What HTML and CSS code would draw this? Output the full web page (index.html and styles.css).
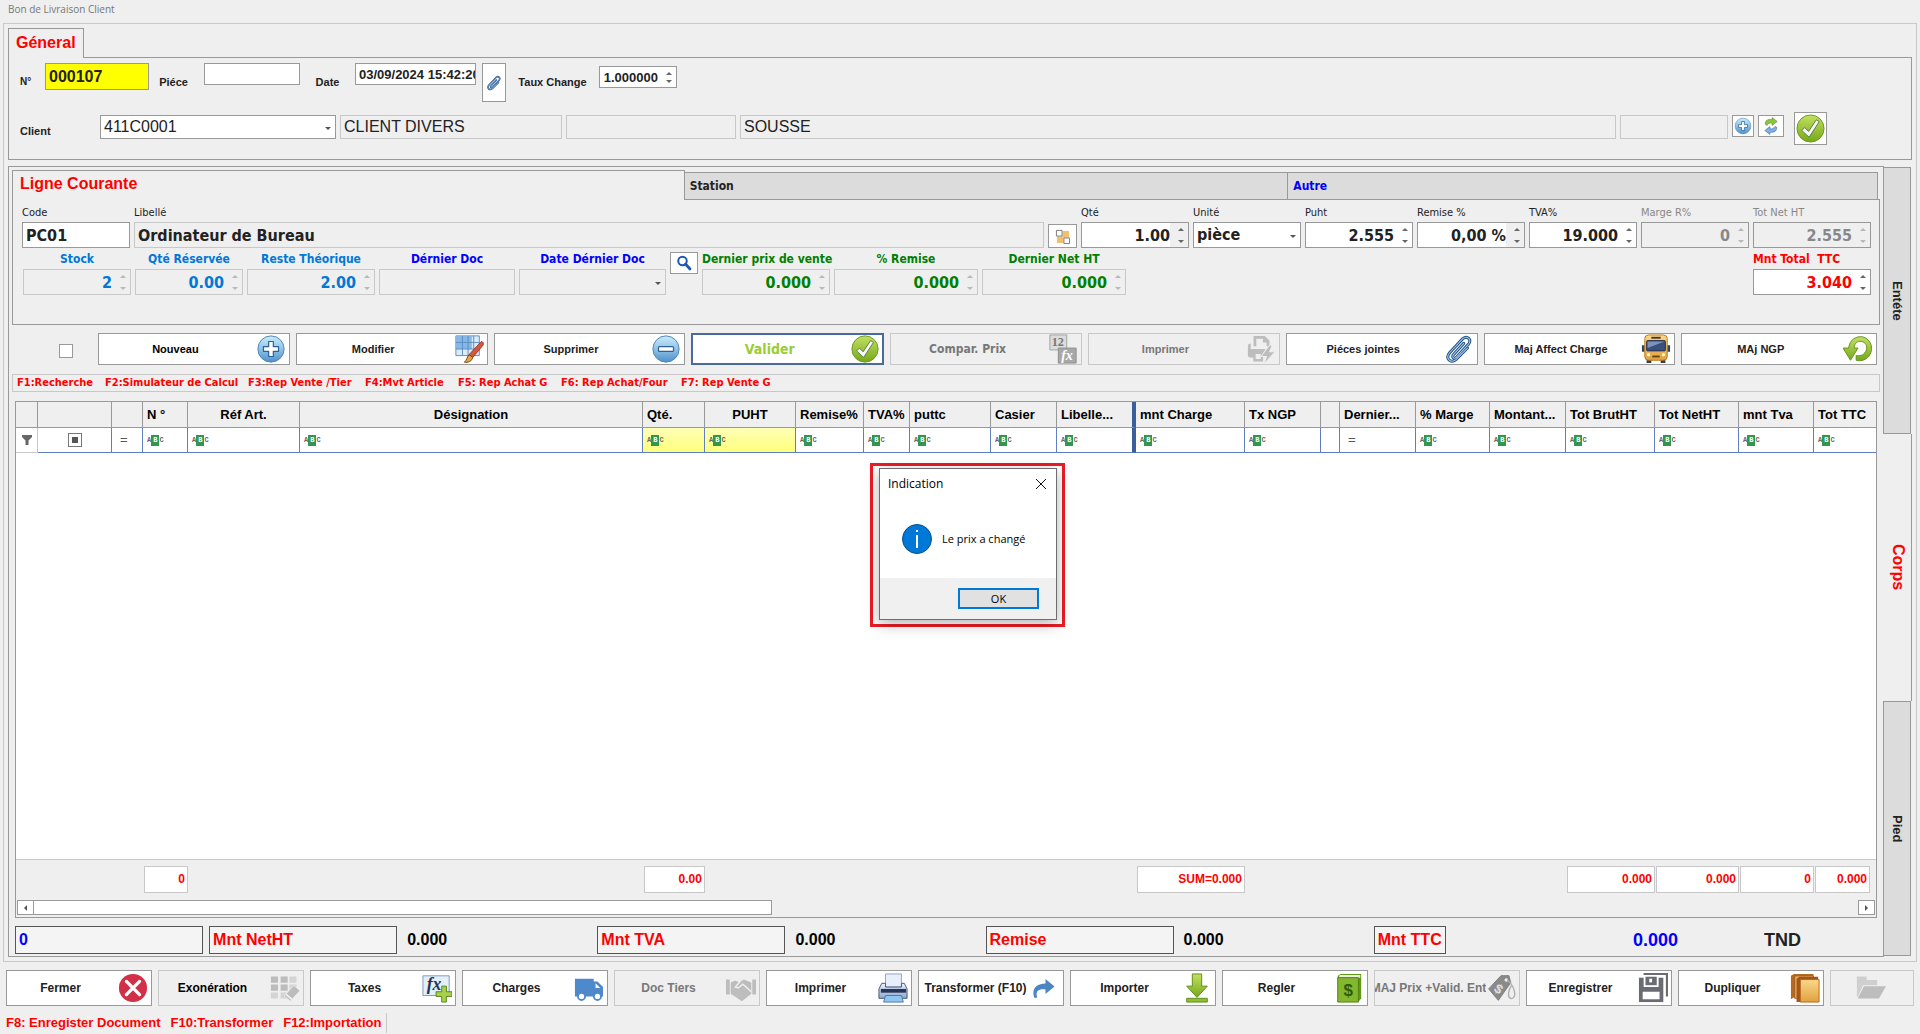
FILE: index.html
```html
<!DOCTYPE html>
<html lang="fr">
<head>
<meta charset="utf-8">
<title>Bon de Livraison Client</title>
<link rel="stylesheet" href="styles.css">
</head>
<body>
<svg class="sprite" aria-hidden="true">
  <defs>
    <linearGradient id="gBlue" x1="0" y1="0" x2="0" y2="1"><stop offset="0" stop-color="#c9ecf8"/><stop offset=".5" stop-color="#8fc3e8"/><stop offset="1" stop-color="#4f8fcb"/></linearGradient>
    <linearGradient id="gGreen" x1="0" y1="0" x2="0" y2="1"><stop offset="0" stop-color="#c4e062"/><stop offset="1" stop-color="#74a81a"/></linearGradient>
    <linearGradient id="gGold" x1="0" y1="0" x2="0" y2="1"><stop offset="0" stop-color="#fbd98a"/><stop offset="1" stop-color="#e0a040"/></linearGradient>
    <linearGradient id="gSteel" x1="0" y1="0" x2="0" y2="1"><stop offset="0" stop-color="#eef3fb"/><stop offset="1" stop-color="#8fa6c8"/></linearGradient>
  </defs>
  <symbol id="i-plus" viewBox="0 0 32 32"><circle cx="16" cy="16" r="14" fill="url(#gBlue)" stroke="#4c82b8"/><path d="M13.500 8h5v5.500H24v5h-5.500V24h-5v-5.500H8v-5h5.500z" fill="#fff" stroke="#2f5f96" stroke-width="1.300" stroke-linejoin="round"/></symbol>
  <symbol id="i-minus" viewBox="0 0 32 32"><circle cx="16" cy="16" r="14" fill="url(#gBlue)" stroke="#4c82b8"/><rect x="8" y="13.500" width="16" height="5" rx="1" fill="#fff" stroke="#2f5f96" stroke-width="1.300"/></symbol>
  <symbol id="i-check" viewBox="0 0 32 32"><circle cx="16" cy="16" r="14" fill="url(#gGreen)" stroke="#6a9a1c"/><path d="M7 18l3-3 4 4L22 7l3 2-10.500 16z" fill="#f4f7fb" stroke="#5b7a3a" stroke-width="1"/></symbol>
  <symbol id="i-tablebrush" viewBox="0 0 32 32"><path d="M2 2h25v21H2z" fill="#dcebf8" stroke="#5b8bc4"/><path d="M2 2h17v14H2z" fill="#86b8e6"/><path d="M2 9h25M2 16h25M9 2v21M15 2v21M21 2v21" stroke="#5b8bc4" fill="none"/><path d="M29 8c2 0 3 2 2 4l-11 13-4-3z" fill="#d4573c" stroke="#8b2b1b" stroke-width=".8"/><path d="M16 22l4 3c-1 4-5 6-9 5 3-2 3-6 5-8z" fill="#e5a541" stroke="#6b3f16"/></symbol>
  <symbol id="i-printbolt" viewBox="0 0 32 32"><path d="M8 2h12l5 5v6h-3V9h-4V5H11v8H8zM2 13c0-2 1-3 3-3v6h16l-6 9H5c-2 0-3-1-3-3z" fill="#bdbdbd"/><path d="M9 20h8v8H9z" fill="#efefef" stroke="#bdbdbd" stroke-width="2.500"/><path d="M25 12l-9 12h6l-3 8 12-13h-6l3-7z" fill="#bdbdbd" stroke="#efefef"/></symbol>
  <symbol id="i-clip" viewBox="0 0 32 32"><g fill="none" stroke-linecap="round"><path d="M21 10L10 22c-2 3 1 5 3 3L26 11c4-5-1-10-6-6L6 20c-5 6 1 12 7 7L25 15" stroke="#1f4f86" stroke-width="3.200"/><path d="M21 10L10 22c-2 3 1 5 3 3L26 11c4-5-1-10-6-6L6 20c-5 6 1 12 7 7L25 15" stroke="#a7cbec" stroke-width="1.100"/></g></symbol>
  <symbol id="i-bus" viewBox="0 0 32 32"><path d="M6 27h5v4H6zM21 27h5v4h-5z" fill="#333f4d"/><path d="M1 12h3v7H1zM28 12h3v7h-3z" fill="#33405a"/><rect x="4" y="1" width="24" height="27" rx="4" fill="url(#gGold)" stroke="#b87718"/><rect x="6" y="7" width="20" height="11" rx="1" fill="#3a4f7b" stroke="#222e4a"/><path d="M7 8h18L7 15z" fill="#7c93be"/><path d="M11 3h10v2H11z" fill="#4a3620"/><path d="M12 23h8v2h-8z" fill="#6b4515"/><circle cx="8" cy="22" r="1.800" fill="#fff6c8"/><circle cx="24" cy="22" r="1.800" fill="#fff6c8"/></symbol>
  <symbol id="i-undo" viewBox="0 0 32 32"><path d="M6 15C7 6 14 2 21 3c7 2 11 9 9 16-2 7-9 11-16 9v-5c5 1 9-1 11-6 1-5-1-8-5-9-5-1-8 2-8 7h4L8 28 0 15z" fill="url(#gGreen)" stroke="#5f9019"/></symbol>
  <symbol id="i-refresh" viewBox="0 0 32 32"><path d="M6 13C5 6 11 3 18 5V1l9 7-9 7v-4c-5-1-7 0-9 4z" fill="#8cc63f" stroke="#4f8a1e"/><path d="M26 18c1 7-5 10-12 9v4l-9-7 9-7v4c5 1 7-1 9-4z" fill="#7fb0e6" stroke="#2d66a8"/></symbol>
  <symbol id="i-search" viewBox="0 0 32 32"><circle cx="13" cy="12" r="8.500" fill="#fff" stroke="#1d57b5" stroke-width="4"/><path d="M19 18l9 10" stroke="#1d57b5" stroke-width="5.500" stroke-linecap="round"/></symbol>
  <symbol id="i-tree" viewBox="0 0 16 16"><path d="M2 8h7v7H2zM8 2h7v7H8z" fill="#f0c070"/><path d="M1.500 1.500h6v6h-6zM9.500 9.500h6v6h-6z" fill="#fff" stroke="#777"/></symbol>
  <symbol id="i-close" viewBox="0 0 32 32"><circle cx="16" cy="16" r="15" fill="#d13046"/><path d="M9 9l14 14M23 9L9 23" stroke="#fff" stroke-width="3.500" stroke-linecap="round"/></symbol>
  <symbol id="i-erase" viewBox="0 0 34 32"><path d="M1 3h8v7H1zM12 3h8v7h-8zM1 12h8v7H1zM12 12h8v7h-8z" fill="#bcbcbc"/><path d="M22 3h8v7h-8zM22 12h8v7h-8zM1 21h8v7H1zM12 21h8v7h-8z" fill="#d4d4d4"/><path d="M27 13l7 6-11 12-7-6z" fill="#bcbcbc" stroke="#efefef"/><path d="M18 23l7 6" stroke="#efefef" stroke-width="2"/></symbol>
  <symbol id="i-van" viewBox="0 0 32 32"><path d="M1 6h20v3h4l6 6v10H1z" fill="#4d89cb"/><path d="M23 11l5 5h-5z" fill="#fff"/><circle cx="8" cy="25" r="3.800" fill="#fff" stroke="#4d89cb" stroke-width="2"/><circle cx="25" cy="25" r="3.800" fill="#fff" stroke="#4d89cb" stroke-width="2"/></symbol>
  <symbol id="i-hands" viewBox="0 0 32 32"><path d="M0 7h4v16H0zM28 7h4v16h-4zM5 10l5-2 4 2 5-3 8 3v12l-10 8-12-8z" fill="#bdbdbd"/><path d="M27 20l-9-8-5 4-3-1 5-6" fill="none" stroke="#efefef" stroke-width="1.600"/></symbol>
  <symbol id="i-printer" viewBox="0 0 32 32"><path d="M8 1h17v14H8z" fill="#e8eefa" stroke="#8ba0c4"/><path d="M4 11h4v4h17v-4h3l3 6v10H1V17z" fill="url(#gSteel)" stroke="#3e547e"/><path d="M3 17h27v4H3z" fill="#25365c"/><path d="M8 24h17l2 7H6z" fill="#8fc6f0" stroke="#4577ad"/></symbol>
  <symbol id="i-redo" viewBox="0 0 32 32"><path d="M3 29C-1 17 6 10 18 10V4l12 10-12 10v-6C9 17 4 20 7 29z" fill="#4a86c2"/></symbol>
  <symbol id="i-down" viewBox="0 0 32 32"><path d="M11 1h10v13h6L16 26 5 14h6z" fill="url(#gGreen)" stroke="#5b8c14"/><path d="M5 27h22v4H5z" fill="#8fbf30" stroke="#5b8c14"/></symbol>
  <symbol id="i-save" viewBox="0 0 32 32"><path d="M6 1h25v24" fill="none" stroke="#6b6b74" stroke-width="2.500"/><path d="M1 5h26v26H1z" fill="#6b6b74"/><path d="M6 4h16v11H6zM5 20h18v8H5z" fill="#fff"/><path d="M8 4h12v9H8z" fill="#6b6b74"/><path d="M12 6h3v4h-3z" fill="#fff"/></symbol>
  <symbol id="i-books" viewBox="0 0 32 32"><path d="M1 3l3-2h21v25H4l-3 2z" fill="#b56a22"/><path d="M5 3h20v24H5z" fill="#e8ab56" stroke="#a05a18"/><path d="M7 6l3-2h20v27H7z" fill="#a4541b"/><path d="M11 7h20v24H11z" fill="url(#gGold)" stroke="#b26a1c"/></symbol>
  <symbol id="i-folder" viewBox="0 0 34 28"><path d="M1 1h11v4h12v6H8L2 24H1z" fill="#cfcfcf"/><path d="M9 12h25l-8 14H2z" fill="#bdbdbd"/></symbol>
  <symbol id="i-funnel" viewBox="0 0 10 10"><path d="M0 0h10v2L6.500 5.500V10h-3V5.500L0 2z" fill="#666"/></symbol>
</svg>

<header class="titlebar">Bon de Livraison Client</header>

<main class="frame">
  <section class="general">
    <div class="gen-tab" role="tab">Géneral</div>
    <div class="gen-panel">
      <div class="doc-row">
        <label for="num">N°</label><input id="num" class="box num" value="000107">
        <label class="mid piece" for="piece">Piéce</label><input id="piece" class="box" value="">
        <label class="mid" for="date">Date</label><input id="date" class="box" value="03/09/2024 15:42:20">
        <button class="ibtn attach" aria-label="Joindre"><svg><use href="#i-clip"/></svg></button>
        <label class="mid" for="taux">Taux Change</label><span class="spin taux"><input id="taux" value="1.000000"></span>
      </div>
      <div class="client-row">
        <label for="client">Client</label>
        <span class="combo"><select id="client"><option>411C0001</option></select></span>
        <input class="box ro w-name" aria-label="Nom du client" value="CLIENT DIVERS" readonly>
        <input class="box ro w-code" aria-label="Code complémentaire" readonly>
        <input class="box ro grow" aria-label="Adresse" value="SOUSSE" readonly>
        <input class="box ro w-extra" aria-label="Complément" readonly>
        <button class="ibtn add" aria-label="Ajouter"><svg><use href="#i-plus"/></svg></button>
        <button class="ibtn sync" aria-label="Actualiser"><svg><use href="#i-refresh"/></svg></button>
        <button class="ibtn okay" aria-label="Confirmer"><svg><use href="#i-check"/></svg></button>
      </div>
    </div>
  </section>

  <section class="work">
    <div class="work-panel">
      <div class="tabs" role="tablist">
        <button class="tab active" role="tab">Ligne Courante</button>
        <button class="tab" role="tab">Station</button>
        <button class="tab autre" role="tab">Autre</button>
      </div>
      <div class="line-panel">
        <div class="fields">
          <label class="field f-108">Code<input class="box" value="PC01"></label>
          <label class="field grow">Libellé<input class="box ro" value="Ordinateur de Bureau" readonly></label>
          <button class="ibtn tree" aria-label="Variantes"><svg><use href="#i-tree"/></svg></button>
          <label class="field f-108">Qté<span class="spin part"><input value="1.00"></span></label>
          <label class="field f-108">Unité<span class="combo"><select><option>pièce</option></select></span></label>
          <label class="field f-108">Puht<span class="spin"><input value="2.555"></span></label>
          <label class="field f-108">Remise %<span class="spin part"><input value="0,00 %"></span></label>
          <label class="field f-108">TVA%<span class="spin"><input value="19.000"></span></label>
          <label class="field f-108 off">Marge R%<span class="spin ro dark"><input value="0" disabled></span></label>
          <label class="field f-118 off">Tot Net HT<span class="spin ro dark"><input value="2.555" disabled></span></label>
        </div>
        <div class="fields second">
          <label class="field stat sky f-108">Stock<span class="spin ro"><input value="2" readonly></span></label>
          <label class="field stat sky f-108">Qté Réservée<span class="spin ro"><input value="0.00" readonly></span></label>
          <label class="field stat sky f-128">Reste Théorique<span class="spin ro"><input value="2.00" readonly></span></label>
          <label class="field stat blue f-136">Dérnier Doc<input class="box ro" readonly></label>
          <label class="field stat blue f-148">Date Dérnier Doc<span class="combo ro"><select><option></option></select></span></label>
          <button class="ibtn find" aria-label="Rechercher"><svg><use href="#i-search"/></svg></button>
          <label class="field stat green f-128">Dernier prix de vente<span class="spin ro"><input value="0.000" readonly></span></label>
          <label class="field stat green f-144">% Remise<span class="spin ro"><input value="0.000" readonly></span></label>
          <label class="field stat green f-144">Dernier Net HT<span class="spin ro"><input value="0.000" readonly></span></label>
          <label class="field stat red f-118 last">Mnt Total&nbsp; TTC<span class="spin"><input value="3.040"></span></label>
        </div>
      </div>

      <div class="actions">
        <input type="checkbox" class="tick" aria-label="Tout sélectionner">
        <button class="btn black"><span>Nouveau</span><svg><use href="#i-plus"/></svg></button>
        <button class="btn"><span>Modifier</span><svg><use href="#i-tablebrush"/></svg></button>
        <button class="btn"><span>Supprimer</span><svg><use href="#i-minus"/></svg></button>
        <button class="btn primary"><span>Valider</span><svg><use href="#i-check"/></svg></button>
        <button class="btn wide-face" disabled><span>Compar. Prix</span><svg viewBox="0 0 32 32"><path d="M2 1h18v16H2z" fill="#dcdcdc" stroke="#a0a0a0"/><text x="4" y="13" font-family="Liberation Serif, serif" font-weight="bold" font-size="13" fill="#777">12</text><path d="M11 15h19v16H11z" fill="#a8a8a8" stroke="#8c8c8c"/><text x="14" y="28" font-family="Liberation Serif, serif" font-style="italic" font-weight="bold" font-size="15" fill="#fff">fx</text></svg></button>
        <button class="btn" disabled><span>Imprimer</span><svg><use href="#i-printbolt"/></svg></button>
        <button class="btn"><span>Piéces jointes</span><svg><use href="#i-clip"/></svg></button>
        <button class="btn"><span>Maj Affect Charge</span><svg><use href="#i-bus"/></svg></button>
        <button class="btn end"><span>MAj NGP</span><svg><use href="#i-undo"/></svg></button>
      </div>

      <div class="hints">
        <span class="h1">F1:Recherche</span><span class="h2">F2:Simulateur de Calcul</span><span class="h3">F3:Rep Vente /Tier</span><span class="h4">F4:Mvt Article</span><span class="h5">F5: Rep Achat G</span><span class="h6">F6: Rep Achat/Four</span><span>F7: Rep Vente G</span>
      </div>

      <div class="grid">
        <table class="lines">
          <colgroup><col class="c22"><col class="c74"><col class="c31"><col class="c45"><col class="c112"><col><col class="c62"><col class="c91"><col class="c68"><col class="c46"><col class="c81"><col class="c66"><col class="c79"><col class="c109"><col class="c76"><col class="c19"><col class="c76"><col class="c74"><col class="c76"><col class="c89"><col class="c84"><col class="c75"><col class="c62"></colgroup>
          <thead>
            <tr><th></th><th></th><th></th><th>N °</th><th class="mid">Réf Art.</th><th class="mid">Désignation</th><th>Qté.</th><th class="mid">PUHT</th><th>Remise%</th><th>TVA%</th><th>puttc</th><th>Casier</th><th class="split">Libelle...</th><th>mnt Charge</th><th>Tx NGP</th><th></th><th>Dernier...</th><th>% Marge</th><th>Montant...</th><th>Tot BrutHT</th><th>Tot NetHT</th><th>mnt Tva</th><th>Tot TTC</th></tr>
          </thead>
          <tbody>
            <tr class="filter">
              <td class="head"><svg class="funnel"><use href="#i-funnel"/></svg></td>
              <td class="mid"><input type="checkbox" class="tri" aria-label="Filtrer la sélection"></td>
              <td class="eq">=</td>
              <td><i class="abc">A<b>B</b>C</i></td><td><i class="abc">A<b>B</b>C</i></td><td><i class="abc">A<b>B</b>C</i></td>
              <td class="hot"><i class="abc">A<b>B</b>C</i></td><td class="hot"><i class="abc">A<b>B</b>C</i></td>
              <td><i class="abc">A<b>B</b>C</i></td><td><i class="abc">A<b>B</b>C</i></td><td><i class="abc">A<b>B</b>C</i></td><td><i class="abc">A<b>B</b>C</i></td>
              <td class="split"><i class="abc">A<b>B</b>C</i></td>
              <td><i class="abc">A<b>B</b>C</i></td><td><i class="abc">A<b>B</b>C</i></td><td></td><td class="eq">=</td>
              <td><i class="abc">A<b>B</b>C</i></td><td><i class="abc">A<b>B</b>C</i></td><td><i class="abc">A<b>B</b>C</i></td><td><i class="abc">A<b>B</b>C</i></td><td><i class="abc">A<b>B</b>C</i></td><td><i class="abc">A<b>B</b>C</i></td>
            </tr>
          </tbody>
        </table>
        <div class="rows"></div>
        <table class="lines sums">
          <colgroup><col class="c22"><col class="c74"><col class="c31"><col class="c45"><col class="c112"><col><col class="c62"><col class="c91"><col class="c68"><col class="c46"><col class="c81"><col class="c66"><col class="c79"><col class="c109"><col class="c76"><col class="c19"><col class="c76"><col class="c74"><col class="c76"><col class="c89"><col class="c84"><col class="c75"><col class="c62"></colgroup>
          <tbody><tr>
            <td colspan="3"></td><td><div class="sum">0</div></td><td colspan="2"></td><td><div class="sum">0.00</div></td><td colspan="6"></td><td><div class="sum">SUM=0.000</div></td><td colspan="5"></td><td><div class="sum">0.000</div></td><td><div class="sum">0.000</div></td><td><div class="sum">0</div></td><td class="end"><div class="sum">0.000</div></td>
          </tr></tbody>
        </table>
        <div class="scroll">
          <button class="sc-btn left" aria-label="Défiler à gauche"></button><div class="thumb"></div><div class="track"></div><button class="sc-btn right" aria-label="Défiler à droite"></button>
        </div>

        <div class="callout">
          <div class="dialog" role="dialog" aria-labelledby="dlg-title">
            <div class="dlg-top"><span id="dlg-title">Indication</span><button class="dlg-x" aria-label="Fermer la boîte"><svg viewBox="0 0 12 12"><path d="M1 1l10 10M11 1L1 11" stroke="#111" fill="none"/></svg></button></div>
            <div class="dlg-body"><svg viewBox="0 0 30 30"><circle cx="15" cy="15" r="14.500" fill="#0078d7" stroke="#0a4f8a"/><path d="M14 6h2v2h-2zM14 11h2v13h-2z" fill="#fff"/></svg><span>Le prix a changé</span></div>
            <div class="dlg-foot"><button class="dlg-ok">OK</button></div>
          </div>
        </div>
      </div>

      <div class="totals">
        <div class="tbox blue">0</div>
        <div class="tbox">Mnt NetHT</div><div class="tval">0.000</div>
        <div class="tbox">Mnt TVA</div><div class="tval">0.000</div>
        <div class="tbox">Remise</div><div class="tval">0.000</div>
        <div class="tbox">Mnt TTC</div><div class="grand">0.000</div><div class="cur">TND</div>
      </div>
    </div>

    <nav class="side">
      <button class="stab">Entéte</button>
      <button class="stab on">Corps</button>
      <button class="stab foot">Pied</button>
    </nav>
  </section>
</main>

<div class="toolbar">
  <button class="btn"><span>Fermer</span><svg><use href="#i-close"/></svg></button>
  <button class="btn black flat"><span>Exonération</span><svg><use href="#i-erase"/></svg></button>
  <button class="btn"><span>Taxes</span><svg viewBox="0 0 32 32"><path d="M1 3h28v21H1z" fill="#e6eef9" stroke="#7596be"/><text x="5" y="18" font-family="Liberation Serif, serif" font-style="italic" font-weight="bold" font-size="19" fill="#26344f">fx</text><path d="M21 14h5v6h6v5h-6v6h-5v-6h-6v-5h6z" fill="#a8d04a" stroke="#4f8418"/></svg></button>
  <button class="btn"><span>Charges</span><svg><use href="#i-van"/></svg></button>
  <button class="btn" disabled><span>Doc Tiers</span><svg><use href="#i-hands"/></svg></button>
  <button class="btn"><span>Imprimer</span><svg><use href="#i-printer"/></svg></button>
  <button class="btn long"><span>Transformer (F10)</span><svg><use href="#i-redo"/></svg></button>
  <button class="btn"><span>Importer</span><svg><use href="#i-down"/></svg></button>
  <button class="btn"><span>Regler</span><svg viewBox="0 0 32 32"><path d="M4 3l3-2h22v26l-3 4H4z" fill="#5f9717"/><path d="M6 2h22v3H5z" fill="#e8eed8"/><path d="M4 5h22v26H4z" fill="#83b82e" stroke="#517f12"/><text x="10" y="24" font-family="Liberation Sans, sans-serif" font-weight="bold" font-size="18" fill="#2f5c0a">$</text></svg></button>
  <button class="btn" disabled><span>MAJ Prix +Valid. Ent</span><svg viewBox="0 0 34 32"><path d="M3 17L17 2h9l2 8-14 20z" fill="#8a8a8a" stroke="#777"/><circle cx="23" cy="7" r="2" fill="#eee"/><path d="M24 7c8 6 12 20 5 21-6-1-3-11 0-15" fill="none" stroke="#b0b0b0" stroke-width="1.600"/><text x="10" y="22" font-family="Liberation Sans, sans-serif" font-weight="bold" font-size="15" fill="#e0e0e0" transform="rotate(35 14 17)">$</text></svg></button>
  <button class="btn"><span>Enregistrer</span><svg><use href="#i-save"/></svg></button>
  <button class="btn"><span>Dupliquer</span><svg><use href="#i-books"/></svg></button>
  <button class="btn only" disabled aria-label="Ouvrir"><svg><use href="#i-folder"/></svg></button>
</div>
<footer class="status"><span>F8: Enregister Document</span><span>F10:Transformer</span><span>F12:Importation</span></footer>
</body>
</html>
```
FILE: styles.css
```css
:root {
  --arial: "Liberation Sans", Arial, sans-serif;
  --tahoma: "DejaVu Sans Condensed", "Noto Sans", sans-serif;
  --ui: "Open Sans", "Noto Sans", sans-serif;
  --line: #999;
  --soft: #c8c8c8;
  --bg: #efefef;
}
* { box-sizing: border-box; }
body { margin: 0; min-height: 100vh; display: flex; flex-direction: column; background: var(--bg); font: 11px/14px var(--arial); color: #222; }
button, input, select { font: inherit; color: inherit; margin: 0; padding: 0; border-radius: 0; }
.sprite { position: absolute; width: 0; height: 0; }
svg { display: block; flex: none; }

.titlebar { height: 23px; padding: 2px 8px; font: 10px/14px var(--ui); color: #777; }
.frame { flex: 1; display: flex; flex-direction: column; gap: 6px; margin: 0 3px; padding: 4px; border: 1px solid var(--soft); }

/* shared controls */
.box { width: 100%; min-width: 0; background: #fff; border: 1px solid var(--line); padding: 0 3px; outline: 0; }
.ro { background: var(--bg); border-color: var(--soft); }
.ibtn { background: #fff; border: 1px solid var(--line); display: flex; align-items: center; justify-content: center; flex: none; }
.spin, .combo { position: relative; display: block; background: #fff; border: 1px solid var(--line); }
.spin input { display: block; width: 100%; height: 100%; border: 0; background: none; text-align: right; padding: 0 18px 0 3px; outline: 0; }
.spin::before, .spin::after { content: ""; position: absolute; right: 4px; border: 3px solid transparent; }
.spin::before { top: 5px; border-top: 0; border-bottom-color: #666; }
.spin::after { bottom: 4px; border-bottom: 0; border-top-color: #666; }
.combo select { display: block; appearance: none; width: 100%; height: 100%; border: 0; background: none; padding: 0 3px; outline: 0; }
.combo::after { content: ""; position: absolute; right: 4px; top: 50%; border: 3px solid transparent; border-bottom: 0; border-top-color: #555; }
.spin.ro, .combo.ro { background: var(--bg); border-color: var(--soft); }
.spin.ro::before, .spin.ro::after { opacity: .4; }
.spin.dark { border-color: var(--line); }
.spin.part { background: linear-gradient(to right, #fff 88px, var(--bg) 88px); }
.grow { flex: 1; min-width: 0; }

/* document header */
.gen-tab { position: relative; width: 76px; height: 30px; margin-bottom: -1px; padding: 0 7px; font: bold 16px/28px var(--arial); color: #f00; background: var(--bg); border: 1px solid var(--line); border-bottom: 0; }
.gen-panel { border: 1px solid var(--line); padding: 5px 84px 14px 11px; }
.doc-row { display: grid; grid-template-columns: 25px 104px 55px 96px 55px 121px 30px 93px 78px; align-items: start; font-weight: bold; font-size: 13px; }
.doc-row label { font-size: 11px; margin-top: 12px; }
.doc-row label:first-child { font-size: 10px; }
.doc-row .mid { text-align: center; }
.doc-row .piece { padding-right: 6px; }
.doc-row .box { height: 22px; }
.doc-row .box.num { background: #ff0; height: 27px; font-size: 16px; }
.doc-row #date { padding-right: 0; }
.attach { width: 24px; height: 39px; justify-self: end; }
.attach svg { width: 16px; height: 18px; }
.taux { height: 22px; margin-top: 3px; }
.client-row { display: flex; align-items: flex-start; gap: 4px; margin-top: 10px; font-size: 16px; }
.client-row label { width: 76px; font-size: 11px; font-weight: bold; margin-top: 12px; }
.client-row .box, .client-row .combo { height: 24px; margin-top: 3px; }
.client-row .combo { width: 236px; flex: none; }
.client-row .w-name { width: 222px; flex: none; }
.client-row .w-code { width: 170px; flex: none; }
.client-row .w-extra { width: 108px; flex: none; }
.client-row .grow { width: auto; }
.add, .sync { width: 22px; height: 22px; margin-top: 3px; }
.sync { width: 26px; }
.add svg, .sync svg { width: 18px; height: 18px; }
.okay { width: 33px; height: 33px; margin-left: 6px; }
.okay svg { width: 31px; height: 31px; }

/* working area */
.work { flex: 1; display: flex; }
.work-panel { flex: 1; min-width: 0; display: flex; flex-direction: column; border: 1px solid var(--line); padding: 3px 3px 2px; }
.side { width: 28px; display: flex; flex-direction: column; padding: 1px 0; }
.stab { flex: 266; width: 28px; margin-left: -1px; padding: 0; writing-mode: vertical-rl; font-weight: bold; font-size: 13px; background: #dcdcdc; border: 1px solid var(--line); }
.stab.on { flex: 268; width: 29px; font-size: 16px; color: #f00; background: var(--bg); border-left-color: var(--bg); border-top: 0; border-bottom: 0; }
.stab.foot { flex: 254; }
.tabs { position: relative; display: grid; grid-template-columns: 673fr 604fr 590fr; align-items: end; margin-bottom: -1px; padding-right: 2px; font: bold 12px/26px var(--tahoma); }
.tab { text-align: left; padding: 0 5px; height: 28px; background: #dcdcdc; border: 1px solid var(--line); margin-left: -1px; }
.tab.active { height: 30px; margin-left: 0; background: var(--bg); border-bottom: 0; font: bold 16px/24px var(--arial); color: #f00; padding: 0 7px 3px; }
.autre { color: #00f; }
.line-panel { border: 1px solid var(--line); padding: 6px 8px 29px 9px; }
.fields { display: flex; align-items: flex-end; gap: 4px; }
.field { display: flex; flex-direction: column; gap: 2px; font: 11px/14px var(--tahoma); white-space: nowrap; flex: none; }
.field.grow { flex: 1; }
.field .box, .field .spin, .field .combo { height: 26px; font: bold 16px/22px var(--tahoma); }
.fields.second { margin-top: 4px; padding-left: 1px; align-items: flex-start; }
.stat { font-weight: bold; font-size: 12px; text-align: center; gap: 3px; }
.f-108 { width: 108px; } .f-118 { width: 118px; } .f-128 { width: 128px; } .f-136 { width: 136px; } .f-144 { width: 144px; } .f-148 { width: 147px; }
.off { color: #888; }
.sky { color: #0078d7; }
.blue { color: #00f; }
.green { color: #008000; }
.red { color: #f00; text-align: left; }
.last { margin-left: auto; }
.tree { width: 29px; height: 24px; }
.tree svg { width: 15px; height: 15px; }
.find { width: 28px; height: 22px; }
.find svg { width: 16px; height: 16px; }

/* buttons */
.btn { flex: 192 1 0; min-width: 0; height: 32px; display: flex; align-items: center; background: #fff; border: 1px solid var(--line); font: bold 12px/14px var(--arial); padding-right: 3px; color: #222; }
.btn.end { flex-grow: 196; }
.btn span { flex: 1; min-width: 0; display: flex; justify-content: center; overflow: hidden; white-space: nowrap; padding-right: 4px; }
.btn svg { width: 30px; height: 30px; }
.btn:disabled, .btn.flat { background: var(--bg); border-color: var(--soft); }
.btn:disabled { color: #777; }
.btn.black { color: #000; }
.btn.primary { border: 2px solid #4a6a9d; font: bold 14px/14px var(--tahoma); color: #9acd32; padding-right: 2px; }
.btn.wide-face { font: bold 12px/14px var(--tahoma); }
.actions { display: flex; gap: 6px; align-items: center; margin: 8px 3px 0 0; font-size: 11px; }
.tick { appearance: none; width: 14px; height: 14px; background: #fff; border: 1px solid var(--line); margin: 4px 19px 0 47px; }
.actions .btn { font-size: 11px; }
.actions .btn.primary { font-size: 14px; }
.actions .btn.wide-face { font-size: 12px; }
.hints { display: flex; height: 18px; margin-top: 9px; padding: 0 4px; border: 1px solid var(--soft); font: bold 11px/16px var(--tahoma); color: #f00; white-space: nowrap; }
.h1 { width: 88px; } .h2 { width: 143px; } .h3 { width: 117px; } .h4 { width: 93px; } .h5 { width: 103px; } .h6 { width: 120px; }

/* line grid */
.grid { position: relative; flex: 1; display: flex; flex-direction: column; margin: 9px 3px 0; border: 1px solid var(--line); }
.lines { width: 100%; table-layout: fixed; border-collapse: separate; border-spacing: 0; font: bold 13px/16px var(--arial); color: #000; }
.lines th { height: 26px; padding: 0 0 0 4px; text-align: left; white-space: nowrap; overflow: hidden; border-right: 1px solid var(--line); border-bottom: 1px solid var(--line); }
.lines th.mid, .lines td.mid { text-align: center; padding: 0; }
.filter td { height: 25px; padding: 0 0 0 4px; background: #fff; border-right: 1px solid #5f7fc4; border-bottom: 1px solid #5f7fc4; vertical-align: middle; }
.filter td.head { padding: 0 0 0 6px; border-color: var(--soft); }
.lines th:last-child, .filter td:last-child { border-right: 0; }
.filter td.hot { background: linear-gradient(#ffffb8, #ffff7a); }
.lines th.split, .filter td.split { border-right: 4px solid #3b5f9b; }
.filter td.eq { padding-left: 8px; font-weight: normal; color: #555; }
.funnel { width: 10px; height: 10px; }
.tri { appearance: none; display: block; width: 14px; height: 14px; margin: 0 auto; border: 1px solid #777; background: #555; box-shadow: inset 0 0 0 3px #fff; }
.abc { display: flex; align-items: center; font: bold 7px/11px "Liberation Mono", monospace; color: #666; }
.abc b { background: #33964f; color: #fff; padding: 0 2px; }
.c22 { width: 22px; } .c74 { width: 74px; } .c31 { width: 31px; } .c45 { width: 45px; } .c112 { width: 112px; } .c62 { width: 62px; } .c91 { width: 91px; } .c68 { width: 68px; } .c46 { width: 46px; } .c81 { width: 81px; } .c66 { width: 66px; } .c79 { width: 79px; } .c109 { width: 109px; } .c76 { width: 76px; } .c19 { width: 19px; } .c89 { width: 89px; } .c84 { width: 84px; } .c75 { width: 75px; }
.rows { flex: 1; min-height: 100px; background: #fff; border-bottom: 1px solid var(--soft); }
.sums { font-size: 12px; color: #f00; }
.sums td { padding: 6px 0 7px 1px; }
.sums td.end { padding-right: 6px; }
.sum { height: 27px; line-height: 25px; text-align: right; padding-right: 2px; background: #fff; border: 1px solid var(--soft); }
.scroll { display: flex; height: 16px; padding: 0 1px; margin-bottom: 1px; }
.sc-btn { flex: none; width: 17px; height: 15px; background: #fff; border: 1px solid var(--line); display: flex; align-items: center; justify-content: center; }
.sc-btn::before { content: ""; border: 3px solid transparent; }
.left::before { border-left: 0; border-right-color: #555; }
.right::before { border-right: 0; border-left-color: #555; }
.thumb { flex: 738; height: 15px; margin-left: -1px; background: #fff; border: 1px solid var(--line); }
.track { flex: 1088; }

/* message box */
.callout { position: absolute; left: calc(50% - 76px); top: 61px; padding: 2px 5px 4px 6px; border: 3px solid #ed1c24; }
.dialog { width: 178px; border: 1px solid #6e6e6e; background: #fff; box-shadow: 0 4px 14px rgba(0, 0, 0, .3); font: 12px/16px var(--ui); color: #000; }
.dlg-top { display: flex; justify-content: space-between; align-items: center; height: 30px; padding: 0 9px 0 8px; }
.dlg-x { border: 0; background: none; }
.dlg-x svg { width: 12px; height: 12px; }
.dlg-body { display: flex; align-items: center; gap: 10px; height: 79px; padding: 0 0 0 22px; font-size: 11px; white-space: nowrap; }
.dlg-body svg { width: 30px; height: 30px; }
.dlg-foot { display: flex; justify-content: flex-end; padding: 10px 17px; background: #f0f0f0; }
.dlg-ok { width: 81px; height: 21px; line-height: 14px; font-size: 11px; background: #e1e1e1; border: 2px solid #0078d7; }

/* totals */
.totals { display: grid; grid-template-columns: repeat(7, 188fr) 72fr 298fr 124fr; align-items: center; gap: 6px; margin-top: 8px; padding-left: 3px; font: bold 16px/26px var(--arial); }
.tbox { height: 28px; padding: 0 3px; background: #f4f4f4; border: 1px solid #555; color: #f00; white-space: nowrap; }
.tbox.blue { color: #00f; }
.tval { padding-left: 4px; color: #000; }
.grand { text-align: right; padding-right: 72px; font-size: 18px; color: #00f; }
.cur { padding-left: 8px; font-size: 18px; }

/* bottom bars */
.toolbar { display: flex; gap: 6px; padding: 8px 6px 0; }
.toolbar .btn { flex: 146 1 146px; height: 36px; }
.toolbar .btn.only { flex: 84 1 84px; justify-content: center; }
.toolbar .btn.long span { padding-right: 0; }
.toolbar .btn.long svg { width: 24px; height: 24px; margin-right: 4px; }
.status { display: flex; gap: 10px; margin: 7px 0 1px; padding-left: 6px; height: 20px; font: bold 13px/20px var(--arial); color: #f00; }
.status span:last-child { padding-right: 5px; border-right: 1px solid var(--soft); }
```
